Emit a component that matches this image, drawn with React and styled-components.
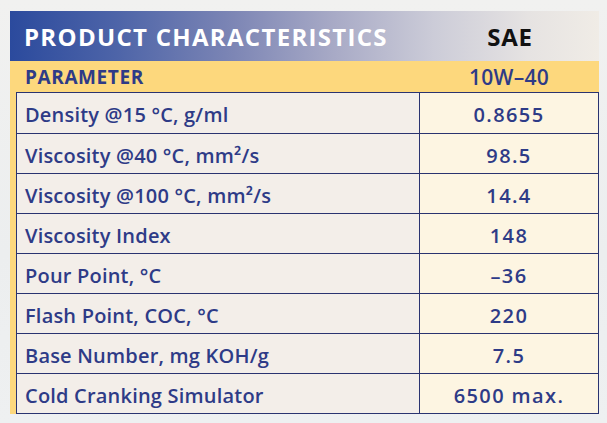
import React from "react";
import styled, { createGlobalStyle } from "styled-components";

const Global = createGlobalStyle`
  html, body { margin: 0; padding: 0; }
  body {
    width: 607px;
    height: 423px;
    overflow: hidden;
    background: linear-gradient(180deg, #f1f1f0 0%, #eceeef 60%, #eef0f1 100%);
    font-family: "Open Sans", Lato, "Liberation Sans", sans-serif;
  }
`;

const Sheet = styled.div`
  margin: 11px 0 0 10px;
  width: 589px;
`;

const Header = styled.div`
  display: grid;
  grid-template-columns: 411px 1fr;
  align-items: center;
  height: 50px;
  background: linear-gradient(90deg, #2b4a9d 0%, #4d64a8 18%, #7d86b5 38%, #a8aac6 55%, #ccccd8 72%, #e6e3e2 88%, #f0ece6 100%);
`;

const Title = styled.div`
  padding-left: 14px;
  color: #ffffff;
  font-size: 24px;
  font-weight: 700;
  letter-spacing: 1.3px;
  white-space: nowrap;
`;

const Sae = styled.div`
  text-align: center;
  color: #111111;
  font-size: 24px;
  font-weight: 700;
  letter-spacing: 0.8px;
`;

const Panel = styled.div`
  background: #fdd87d;
  padding-left: 6px;
`;

const ParamRow = styled.div`
  display: grid;
  grid-template-columns: 405px 1fr;
  align-items: center;
  height: 31px;
  color: #2e3b87;
`;

const ParamLabel = styled.div`
  padding-left: 9px;
  font-size: 19px;
  font-weight: 700;
  letter-spacing: 0.6px;
`;

const ParamValue = styled.div`
  text-align: center;
  font-weight: 600;
  font-size: 21px;
  letter-spacing: 0.3px;
  padding-right: 2px;
`;

const Table = styled.div`
  border: 1.5px solid #2a3370;
`;

const Row = styled.div`
  display: grid;
  grid-template-columns: 403px 1fr;
  height: 40px;
  border-top: ${(p) => (p.$first ? "none" : "1.5px solid #2a3370")};
  box-sizing: border-box;
`;

const Cell = styled.div`
  display: flex;
  align-items: center;
  padding-top: 3px;
  box-sizing: border-box;
  color: #2e3b87;
  font-size: 20px;
  font-weight: 600;
  white-space: nowrap;
`;

const LabelCell = styled(Cell)`
  background: #f3eee9;
  padding-left: 8px;
  letter-spacing: 0.2px;
  border-right: 1.5px solid #2a3370;
`;

const ValueCell = styled(Cell)`
  background: #fdf5e2;
  justify-content: center;
  letter-spacing: 1.4px;
`;

const rows = [
  ["Density @15 °C, g/ml", "0.8655"],
  ["Viscosity @40 °C, mm²/s", "98.5"],
  ["Viscosity @100 °C, mm²/s", "14.4"],
  ["Viscosity Index", "148"],
  ["Pour Point, °C", "–36"],
  ["Flash Point, COC, °C", "220"],
  ["Base Number, mg KOH/g", "7.5"],
  ["Cold Cranking Simulator", "6500 max."],
];

export default function App() {
  return (
    <>
      <Global />
      <Sheet>
        <Header>
          <Title>PRODUCT CHARACTERISTICS</Title>
          <Sae>SAE</Sae>
        </Header>
        <Panel>
          <ParamRow>
            <ParamLabel>PARAMETER</ParamLabel>
            <ParamValue>10W–40</ParamValue>
          </ParamRow>
          <Table>
            {rows.map(([label, value], i) => (
              <Row key={label} $first={i === 0}>
                <LabelCell>{label}</LabelCell>
                <ValueCell>{value}</ValueCell>
              </Row>
            ))}
          </Table>
        </Panel>
      </Sheet>
    </>
  );
}
